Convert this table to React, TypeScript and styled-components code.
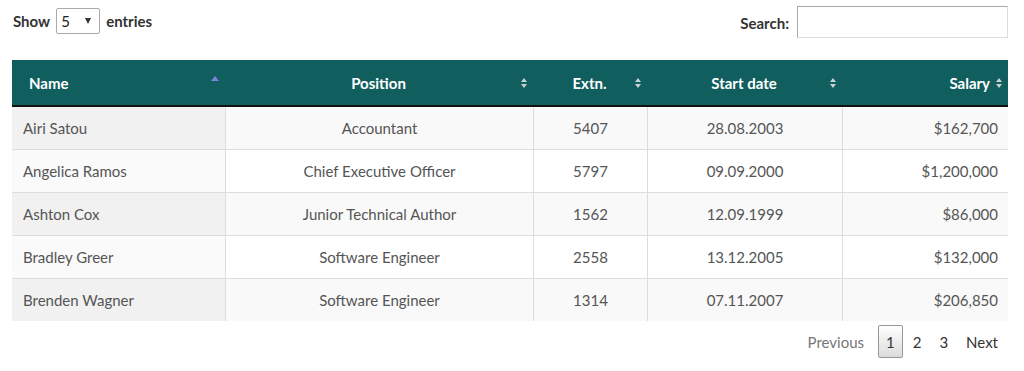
import React from "react";
import styled, { createGlobalStyle } from "styled-components";

const GlobalStyle = createGlobalStyle`
  body {
    margin: 0;
    background: #fff;
    font-family: Lato, "Open Sans", sans-serif;
    color: #555;
  }
`;

const Wrapper = styled.div`
  padding: 7px 16px 0 12px;
  width: 996px;
`;

const TopBar = styled.div`
  display: flex;
  justify-content: space-between;
  align-items: flex-start;
  height: 32px;
  margin-bottom: 21px;
`;

const Label = styled.label<{ offset?: number }>`
  display: flex;
  align-items: center;
  gap: 6px;
  margin-top: ${(p) => p.offset ?? 0}px;
  padding-left: 1px;
  font-size: 15px;
  font-weight: 700;
  color: #333;
`;

const SelectBox = styled.div`
  position: relative;
  width: 44px;
  height: 26px;
  box-sizing: border-box;
  border: 1px solid #aaa;
  border-radius: 2px;
  background: #fff;
  display: flex;
  align-items: center;
  padding-left: 4px;
  font-weight: 400;
  font-size: 15px;
  color: #222;
`;

const Caret = styled.span`
  position: absolute;
  right: 8px;
  top: 9px;
  width: 0;
  height: 0;
  border-left: 3.5px solid transparent;
  border-right: 3.5px solid transparent;
  border-top: 6px solid #333;
`;

const SearchInput = styled.input`
  width: 211px;
  height: 32px;
  box-sizing: border-box;
  border: 1px solid #aaa;
  border-right-color: #ddd;
  border-bottom-color: #ddd;
  padding: 0 4px;
  margin-left: 2px;
  margin-top: -1px;
`;

const Table = styled.table`
  width: 996px;
  border-collapse: collapse;
  font-size: 15px;
`;

const HeadCell = styled.th<{ align: string }>`
  background: #105e5e;
  color: #fff;
  font-weight: 700;
  height: 46px;
  padding: 0 18px 0 17px;
  text-align: ${(p) => p.align};
  border-bottom: 2px solid #111;
  position: relative;
  box-sizing: border-box;
`;

const SortIcon = styled.span<{ active?: boolean }>`
  position: absolute;
  right: 6px;
  top: ${(p) => (p.active ? 16 : 18)}px;
  display: flex;
  flex-direction: column;
  gap: 2px;
  &::before,
  &::after {
    content: "";
    width: 0;
    height: 0;
    border-left: ${(p) => (p.active ? 4 : 3.5)}px solid transparent;
    border-right: ${(p) => (p.active ? 4 : 3.5)}px solid transparent;
  }
  &::before {
    border-bottom: ${(p) => (p.active ? "5px solid #7f7fe0" : "4px solid #c6d3d3")};
  }
  &::after {
    border-top: 4px solid ${(p) => (p.active ? "transparent" : "#c6d3d3")};
  }
`;

const Row = styled.tr<{ odd: boolean }>`
  background: ${(p) => (p.odd ? "#f9f9f9" : "#fff")};
`;

const Cell = styled.td<{ align: string; sorted?: boolean; odd?: boolean }>`
  height: 42px;
  padding: 0 10px 0 11px;
  text-align: ${(p) => p.align};
  border-top: 1px solid #ddd;
  border-left: 1px solid #ddd;
  color: #555;
  background: ${(p) =>
    p.sorted ? (p.odd ? "#f1f1f1" : "#fafafa") : "transparent"};
  &:first-child {
    border-left: none;
  }
`;

const Footer = styled.div`
  display: flex;
  justify-content: flex-end;
  align-items: center;
  margin-top: 4px;
  padding-right: 2px;
  font-size: 15px;
`;

const PageButton = styled.span<{ current?: boolean; disabled?: boolean }>`
  display: inline-flex;
  align-items: center;
  justify-content: center;
  height: 33px;
  min-width: 24px;
  box-sizing: border-box;
  padding: 0 7px;
  margin-left: 2px;
  color: ${(p) => (p.disabled ? "#777" : "#333")};
  border: 1px solid ${(p) => (p.current ? "#979797" : "transparent")};
  border-radius: 2px;
  background: ${(p) =>
    p.current ? "linear-gradient(to bottom, #fff 0%, #dcdcdc 100%)" : "none"};
  &:first-child {
    margin-right: 4px;
  }
`;

const columns = [
  { title: "Name", align: "left", width: 213 },
  { title: "Position", align: "center", width: 308 },
  { title: "Extn.", align: "center", width: 114 },
  { title: "Start date", align: "center", width: 195 },
  { title: "Salary", align: "right", width: 166 },
];

const rows = [
  ["Airi Satou", "Accountant", "5407", "28.08.2003", "$162,700"],
  ["Angelica Ramos", "Chief Executive Officer", "5797", "09.09.2000", "$1,200,000"],
  ["Ashton Cox", "Junior Technical Author", "1562", "12.09.1999", "$86,000"],
  ["Bradley Greer", "Software Engineer", "2558", "13.12.2005", "$132,000"],
  ["Brenden Wagner", "Software Engineer", "1314", "07.11.2007", "$206,850"],
];

export default function App() {
  return (
    <>
      <GlobalStyle />
      <Wrapper>
        <TopBar>
          <Label offset={1}>
            Show
            <SelectBox>
              5<Caret />
            </SelectBox>
            entries
          </Label>
          <Label>
            Search:
            <SearchInput type="search" />
          </Label>
        </TopBar>
        <Table>
          <colgroup>
            {columns.map((c) => (
              <col key={c.title} style={{ width: c.width }} />
            ))}
          </colgroup>
          <thead>
            <tr>
              {columns.map((c, i) => (
                <HeadCell key={c.title} align={c.align}>
                  {c.title}
                  <SortIcon active={i === 0} />
                </HeadCell>
              ))}
            </tr>
          </thead>
          <tbody>
            {rows.map((r, ri) => (
              <Row key={r[0]} odd={ri % 2 === 0}>
                {r.map((v, ci) => (
                  <Cell
                    key={ci}
                    align={columns[ci].align}
                    sorted={ci === 0}
                    odd={ri % 2 === 0}
                  >
                    {v}
                  </Cell>
                ))}
              </Row>
            ))}
          </tbody>
        </Table>
        <Footer>
          <PageButton disabled>Previous</PageButton>
          <PageButton current>1</PageButton>
          <PageButton>2</PageButton>
          <PageButton>3</PageButton>
          <PageButton>Next</PageButton>
        </Footer>
      </Wrapper>
    </>
  );
}
